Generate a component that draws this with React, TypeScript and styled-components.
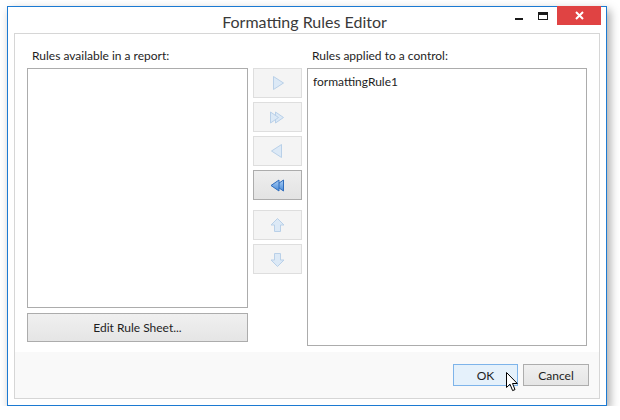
import { FC } from 'react';
import styled, { createGlobalStyle } from 'styled-components';

const GlobalStyle = createGlobalStyle`
    html, body {
        margin: 0;
        padding: 0;
        background: #ffffff;
    }
    body {
        font-family: Lato, 'Noto Sans', sans-serif;
        font-size: 12px;
        color: #1e1e1e;
    }
`;

type IconKind = 'right' | 'allRight' | 'left' | 'allLeft' | 'up' | 'down';

const ArrowIcon: FC<{ kind: IconKind; active?: boolean }> = ({ kind, active }) => {
    const fill = active ? 'url(#blueFill)' : '#dce9f6';
    const stroke = active ? '#2f6dbd' : '#b9d0e8';
    const shapes: Record<IconKind, JSX.Element> = {
        right: <path d="M4.5 1.5 L14.5 8 L4.5 14.5 Z" />,
        allRight: (
            <>
                <path d="M6.5 3 L14.5 8.5 L6.5 14 Z" />
                <path d="M1.5 3 L9.5 8.5 L1.5 14 Z" />
            </>
        ),
        left: <path d="M12.5 1.5 L2.5 8 L12.5 14.5 Z" />,
        allLeft: (
            <>
                <path d="M14.5 3 L6.5 8.5 L14.5 14 Z" />
                <path d="M10 3 L2 8.5 L10 14 Z" />
            </>
        ),
        up: <path d="M8.5 1.5 L15 8 L11.5 8 L11.5 14.5 L5.5 14.5 L5.5 8 L2 8 Z" />,
        down: <path d="M8.5 15.5 L15 9 L11.5 9 L11.5 2.5 L5.5 2.5 L5.5 9 L2 9 Z" />,
    };
    return (
        <svg width="17" height="17" viewBox="0 0 17 17">
            <defs>
                <linearGradient id="blueFill" x1="0" y1="0" x2="0" y2="1">
                    <stop offset="0" stopColor="#a9cdf4" />
                    <stop offset="1" stopColor="#4a8bd8" />
                </linearGradient>
            </defs>
            <g fill={fill} stroke={stroke} strokeWidth="1" strokeLinejoin="round">
                {shapes[kind]}
            </g>
        </svg>
    );
};

const Cursor: FC = () => (
    <svg width="13" height="20" viewBox="0 0 13 20">
        <path
            d="M0.5 0.5 L0.5 15.5 L4 12.2 L6.6 18.6 L9 17.6 L6.5 11.5 L11.3 11.5 Z"
            fill="#ffffff"
            stroke="#000000"
            strokeWidth="1"
            strokeLinejoin="round"
        />
    </svg>
);

export const App: FC = () => {
    return (
        <>
            <GlobalStyle />
            <Window>
                <TitleBar>
                    <span />
                    <Title>Formatting Rules Editor</Title>
                    <Controls>
                        <Minimize />
                        <Maximize />
                        <Close>
                            <svg width="9" height="9" viewBox="0 0 9 9">
                                <path d="M1 1 L8 8 M8 1 L1 8" stroke="#fff" strokeWidth="2" />
                            </svg>
                        </Close>
                    </Controls>
                </TitleBar>
                <Frame>
                    <Content>
                        <Label>Rules available in a report:</Label>
                        <span />
                        <Label>Rules applied to a control:</Label>

                        <LeftColumn>
                            <ListBox $height={240} />
                            <WideButton>Edit Rule Sheet...</WideButton>
                        </LeftColumn>

                        <MoveColumn>
                            <MoveGroup>
                                <MoveButton disabled><ArrowIcon kind="right" /></MoveButton>
                                <MoveButton disabled><ArrowIcon kind="allRight" /></MoveButton>
                                <MoveButton disabled><ArrowIcon kind="left" /></MoveButton>
                                <MoveButton><ArrowIcon kind="allLeft" active /></MoveButton>
                            </MoveGroup>
                            <MoveGroup>
                                <MoveButton disabled><ArrowIcon kind="up" /></MoveButton>
                                <MoveButton disabled><ArrowIcon kind="down" /></MoveButton>
                            </MoveGroup>
                        </MoveColumn>

                        <ListBox $height={278}>
                            <ListItem>formattingRule1</ListItem>
                        </ListBox>
                    </Content>
                    <Footer>
                        <DialogButton $hover>
                            OK
                            <CursorSpot>
                                <Cursor />
                            </CursorSpot>
                        </DialogButton>
                        <DialogButton $wide>Cancel</DialogButton>
                    </Footer>
                </Frame>
            </Window>
        </>
    );
};

const Window = styled.div`
    box-sizing: border-box;
    margin: 6px 0 0 7px;
    width: 600px;
    height: 400px;
    border: 1px solid #1c7ad2;
    background: #ffffff;
    box-shadow: 3px 4px 9px rgba(0, 0, 0, 0.35);
    display: flex;
    flex-direction: column;
`;

const TitleBar = styled.div`
    display: grid;
    grid-template-columns: 1fr auto 1fr;
    height: 26px;
    padding-right: 5px;
`;

const Title = styled.div`
    margin-top: 5px;
    line-height: 20px;
    font-size: 16px;
    color: #3a3a3a;
`;

const Controls = styled.div`
    justify-self: end;
    display: flex;
    align-items: flex-start;
`;

const Minimize = styled.div`
    width: 8px;
    height: 2px;
    background: #1a1a1a;
    margin: 11px 15px 0 0;
`;

const Maximize = styled.div`
    box-sizing: border-box;
    width: 10px;
    height: 8px;
    border: 1px solid #1a1a1a;
    border-top-width: 3px;
    margin: 5px 9px 0 0;
`;

const Close = styled.div`
    width: 44px;
    height: 19px;
    margin-top: -1px;
    background: #e04343;
    display: flex;
    align-items: center;
    justify-content: center;
`;

const Frame = styled.div`
    flex: 1;
    margin: 0 6px 6px 6px;
    border: 1px solid #d6d6d6;
    display: flex;
    flex-direction: column;
`;

const Content = styled.div`
    display: grid;
    grid-template-columns: 221px 49px 280px;
    grid-template-rows: 16px auto;
    column-gap: 5px;
    row-gap: 4px;
    align-items: start;
    padding: 14px 12px 6px 12px;
    background: #ffffff;
`;

const Label = styled.div`
    line-height: 16px;
    padding-left: 5px;
    color: #1e1e1e;
    white-space: nowrap;
`;

const LeftColumn = styled.div`
    display: flex;
    flex-direction: column;
    gap: 5px;
`;

const ListBox = styled.div<{ $height: number }>`
    box-sizing: border-box;
    height: ${(p) => p.$height}px;
    border: 1px solid #acacac;
    background: #ffffff;
    padding: 5px 5px;
`;

const ListItem = styled.div`
    line-height: 16px;
    color: #1e1e1e;
`;

const WideButton = styled.button`
    box-sizing: border-box;
    height: 29px;
    width: 100%;
    border: 1px solid #acacac;
    background: linear-gradient(#f0f0f0, #e5e5e5);
    font-family: inherit;
    font-size: 12px;
    color: #1e1e1e;
    padding: 0;
`;

const MoveColumn = styled.div`
    display: flex;
    flex-direction: column;
    gap: 10px;
`;

const MoveGroup = styled.div`
    display: flex;
    flex-direction: column;
    gap: 4px;
`;

const MoveButton = styled.button`
    box-sizing: border-box;
    width: 49px;
    height: 30px;
    padding: 0;
    display: flex;
    align-items: center;
    justify-content: center;
    border: 1px solid #acacac;
    background: linear-gradient(#eeeeee, #e3e3e3);

    &:disabled {
        border-color: #dedede;
        background: #f4f4f4;
    }
`;

const Footer = styled.div`
    flex: 1;
    background: #f9f9f9;
    display: flex;
    justify-content: flex-end;
    align-items: flex-start;
    gap: 5px;
    padding: 12px 10px 0 0;
`;

const DialogButton = styled.button<{ $hover?: boolean; $wide?: boolean }>`
    position: relative;
    box-sizing: border-box;
    width: ${(p) => (p.$wide ? 66 : 65)}px;
    height: 22px;
    padding: 0;
    font-family: inherit;
    font-size: 12px;
    color: #1e1e1e;
    border: 1px solid ${(p) => (p.$hover ? '#7eb4ea' : '#adadad')};
    background: ${(p) => (p.$hover ? '#e5f1fb' : 'linear-gradient(#f0f0f0, #e5e5e5)')};
`;

const CursorSpot = styled.span`
    position: absolute;
    left: 52px;
    top: 7px;
    line-height: 0;
`;

export default App;
